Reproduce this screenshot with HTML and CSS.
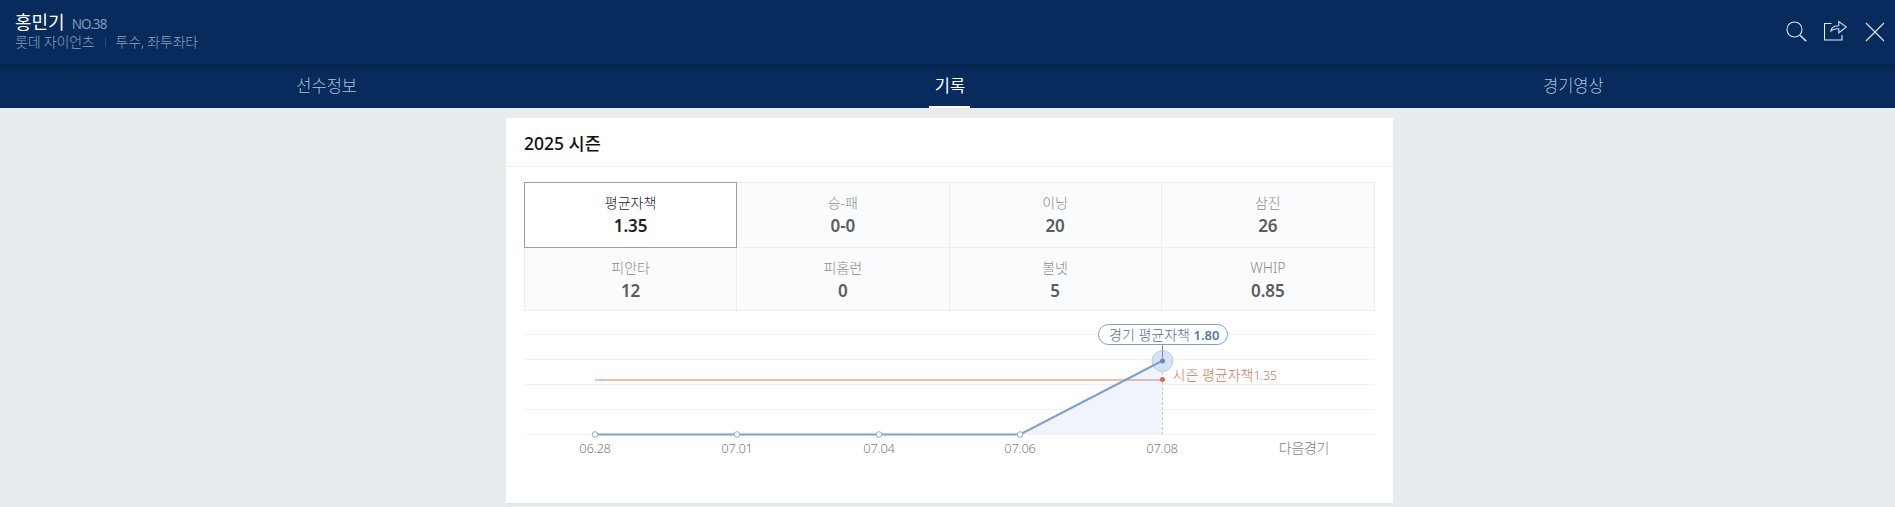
FILE: index.html
```html
<!DOCTYPE html>
<html lang="ko">
<head>
<meta charset="utf-8">
<title>홍민기</title>
<link rel="stylesheet" href="styles.css">
</head>
<body>
<header class="top">
  <div class="player">
    <div class="name-row"><span class="name">홍민기</span><span class="no">NO.38</span></div>
    <div class="meta"><span>롯데 자이언츠</span><i class="sep"></i><span>투수, 좌투좌타</span></div>
  </div>
  <div class="actions">
    <svg class="ic-search" width="21" height="21" viewBox="0 0 21 21" fill="none" stroke="#d5e4f5" stroke-width="1.1"><circle cx="8.500" cy="8.500" r="7.500"/><path d="M14 14.200l6.200 5.900" stroke-width="1.500"/></svg>
    <svg class="ic-share" width="24" height="21" viewBox="0 0 24 21" fill="none" stroke="#e4eefa"><path d="M7.500 3.500H.5v16.500h17.500v-5" stroke-width="1.100"/><path d="M6.800 11c.4-3.500 3-5.300 8-5.300V1.500l7.500 5.500-7.500 5.800v-4C11.800 8.600 9 9 6.800 11z" stroke="#c9dcf2" stroke-width="1.100"/></svg>
    <svg class="ic-close" width="20" height="20" viewBox="0 0 20 20" stroke="#dfeaf6" stroke-width="1.100"><path d="M1 1l18 18M19 1L1 19"/></svg>
  </div>
</header>
<nav class="tabs">
  <a class="tab">선수정보</a>
  <a class="tab active"><span>기록</span></a>
  <a class="tab">경기영상</a>
</nav>
<main class="stage">
  <section class="card">
    <h2 class="card-title">2025 시즌</h2>
    <div class="card-body">
      <div class="stats">
        <div class="stat selected"><span class="lbl">평균자책</span><b>1.35</b></div>
        <div class="stat"><span class="lbl">승-패</span><b>0-0</b></div>
        <div class="stat"><span class="lbl">이닝</span><b>20</b></div>
        <div class="stat"><span class="lbl">삼진</span><b>26</b></div>
        <div class="stat"><span class="lbl">피안타</span><b>12</b></div>
        <div class="stat"><span class="lbl">피홈런</span><b>0</b></div>
        <div class="stat"><span class="lbl">볼넷</span><b>5</b></div>
        <div class="stat"><span class="lbl">WHIP</span><b>0.85</b></div>
      </div>
      <svg class="chart" width="851" height="150" viewBox="524 316 851 150">
        <g stroke="#eff1f3" stroke-width="1">
          <path d="M524 334.500H1375M524 359.500H1375M524 384.500H1375M524 409.500H1375M524 434.500H1375"/>
        </g>
        <path d="M1020 434.500L1162 361V434.500Z" fill="#f0f5fd"/>
        <path d="M1162.500 352V434" stroke="#c3c9d0" stroke-dasharray="3 2" fill="none"/>
        <path d="M595 380H1162" stroke="#d98068" stroke-width="1.200" fill="none"/>
        <circle cx="1162.500" cy="361" r="10.500" fill="#d6e3f6" stroke="#b6cdeb"/>
        <path d="M1162.500 344V361" stroke="#6c94b8"/>
        <path d="M595 434.500H1020L1162 361" stroke="#7f9fcc" stroke-width="2" fill="none"/>
        <circle cx="1162.500" cy="361" r="2.500" fill="#6a87c0"/>
        <circle cx="1162.500" cy="379.500" r="2.500" fill="#d8694a"/>
        <g fill="#fff" stroke="#8fabd0" stroke-width="1">
          <circle cx="595" cy="434.500" r="2.800"/>
          <circle cx="737" cy="434.500" r="2.800"/>
          <circle cx="879" cy="434.500" r="2.800"/>
          <circle cx="1020" cy="434.500" r="2.800"/>
        </g>
        <rect x="1098.500" y="324.500" width="129" height="20" rx="10" fill="#fff" stroke="#7fa0bd"/>
        <text x="1109" y="340" class="t-tip">경기 평균자책</text>
        <text x="1193.500" y="340" class="t-tip-v">1.80</text>
        <text x="1172.500" y="380" class="t-season">시즌 평균자책<tspan class="t-season-v">1.35</tspan></text>
        <g class="t-axis" text-anchor="middle">
          <text x="595" y="453">06.28</text>
          <text x="737" y="453">07.01</text>
          <text x="879" y="453">07.04</text>
          <text x="1020" y="453">07.06</text>
          <text x="1162" y="453">07.08</text>
          <text class="t-next" x="1304" y="453">다음경기</text>
        </g>
      </svg>
    </div>
  </section>
</main>
</body>
</html>
```
FILE: styles.css
```css
* { box-sizing: border-box; }
html, body { margin: 0; padding: 0; height: 100%; overflow: hidden; }
body {
  background: #e8ecef;
  font-family: "Noto Sans", "Noto Sans CJK KR", sans-serif;
  color: #222;
}
.top {
  height: 64px;
  background: #062b5c;
  display: flex;
  justify-content: space-between;
  padding: 11px 10px 0 15px;
}
.player { display: flex; flex-direction: column; }
.name-row { display: flex; align-items: baseline; gap: 7px; height: 23px; line-height: 23px; }
.name { font-size: 18px; color: #fff; font-weight: 400; }
.no { font-size: 13.500px; color: #7f9aba; letter-spacing: -0.9px; }
.meta { display: flex; align-items: center; font-size: 14px; line-height: 18px; margin-top: -1px; color: #8aa2c0; letter-spacing: -0.2px; font-weight: 300; }
.sep { width: 1px; height: 10px; background: #2c4c78; margin: 0 10px; }
.actions { display: flex; align-items: flex-start; gap: 17px; padding-top: 9px; }
.ic-search { margin-top: 1px; }
.ic-close { margin-top: 2px; }
.tabs {
  height: 44px;
  background: linear-gradient(#05274f 0, #062b5c 10px);
  display: grid;
  grid-template-columns: repeat(3, 1fr);
  padding: 0 10px 0 15px;
}
.tab {
  display: flex;
  justify-content: center;
  font-size: 16.500px;
  line-height: 44px;
  color: #adc1da;
  font-weight: 300;
}
.tab.active { color: #fff; font-weight: 400; }
.tab.active span { display: block; width: 41px; text-align: center; height: 44px; border-bottom: 2px solid #fff; white-space: nowrap; }
.stage { display: flex; justify-content: center; padding-top: 10px; }
.card {
  width: 887px;
  height: 387px;
  margin-left: 4px;
  background: #fff;
  border-bottom: 2px solid #e2e6ea;
}
.card-title {
  margin: 0;
  height: 49px;
  padding-left: 18px;
  font-size: 17.500px;
  font-weight: 500;
  line-height: 50px;
  color: #111;
  border-bottom: 1px solid #eceef0;
}
.card-body { padding: 15px 18px 0; }
.stats {
  display: grid;
  grid-template-columns: repeat(4, 1fr);
  grid-template-rows: 65px 64px;
  width: 851px;
  height: 129px;
  border: 1px solid #eceef1;
  background: #fafbfc;
}
.stat {
  display: flex;
  flex-direction: column;
  align-items: center;
  padding-top: 11px;
  border-right: 1px solid #eceef1;
  border-bottom: 1px solid #eceef1;
}
.stat:nth-child(4n) { border-right: 0; }
.stat:nth-child(n+5) { border-bottom: 0; }
.stat .lbl { font-size: 14px; line-height: 18px; color: #8c8c8c; font-weight: 300; }
.stat b { font-size: 17px; line-height: 27px; font-weight: 600; color: #5c5c5c; }
.stat.selected { background: #fff; border: 1px solid #9a9fa3; margin: -1px 0 0 -1px; }
.stat.selected .lbl { color: #222; font-weight: 300; }
.stat.selected b { color: #222; }
.chart { display: block; margin-top: 5px; }
.chart text { font-family: "Noto Sans", "Noto Sans CJK KR", sans-serif; font-weight: 300; }
.chart .t-tip { font-size: 14px; fill: #4f7290; }
.chart .t-tip-v { font-size: 13px; font-weight: 600; fill: #4f7aaa; }
.chart .t-season { font-size: 14px; fill: #cc7a5a; }
.t-season-v { font-size: 12.500px; letter-spacing: -0.3px; }
.t-axis { font-size: 13px; fill: #7d7d7d; letter-spacing: -0.3px; }
.t-next { font-size: 14px; }
```
